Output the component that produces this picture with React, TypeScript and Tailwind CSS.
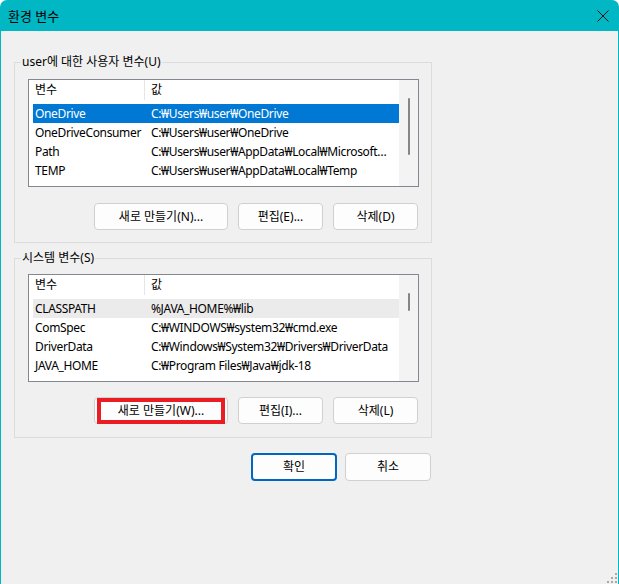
import React from 'react';

type Row = { name: string; value: string };

const userVars: Row[] = [
  { name: 'OneDrive', value: 'C:₩Users₩user₩OneDrive' },
  { name: 'OneDriveConsumer', value: 'C:₩Users₩user₩OneDrive' },
  { name: 'Path', value: 'C:₩Users₩user₩AppData₩Local₩Microsoft…' },
  { name: 'TEMP', value: 'C:₩Users₩user₩AppData₩Local₩Temp' },
];

const systemVars: Row[] = [
  { name: 'CLASSPATH', value: '%JAVA_HOME%₩lib' },
  { name: 'ComSpec', value: 'C:₩WINDOWS₩system32₩cmd.exe' },
  { name: 'DriverData', value: 'C:₩Windows₩System32₩Drivers₩DriverData' },
  { name: 'JAVA_HOME', value: 'C:₩Program Files₩Java₩jdk-18' },
];

function VarList({
  rows,
  selected,
  focused,
  thumbTop,
  thumbHeight,
}: {
  rows: Row[];
  selected: number;
  focused: boolean;
  thumbTop: string;
  thumbHeight: string;
}) {
  return (
    <div className="ml-[13px] flex h-[108px] w-[391px] border border-[#828790] bg-white">
      <div className="w-[370px] overflow-hidden">
        {/* header */}
        <div className="flex h-[24px] items-start">
          <div className="flex h-[20px] w-[116px] items-center border-r border-[#e5e5e5] pl-[6px]">변수</div>
          <div className="flex h-[20px] items-center pl-[6px]">값</div>
        </div>
        {/* rows */}
        <div className="pl-[4px] tracking-[-0.35px]">
          {rows.map((r, i) => {
            const sel = i === selected;
            const bg = sel ? (focused ? 'bg-[#0078d4] text-white' : 'bg-[#ebebeb]') : '';
            return (
              <div key={r.name} className={`flex h-[19px] items-center whitespace-nowrap ${bg}`}>
                <div className="w-[112px] truncate pl-[2px]">{r.name}</div>
                <div className="w-[254px] truncate pl-[6px]">{r.value}</div>
              </div>
            );
          })}
        </div>
      </div>
      {/* scrollbar */}
      <div className="flex w-[19px] justify-center bg-[#f3f3f3]">
        <div className={`w-[2px] rounded-full bg-[#868686] ${thumbTop} ${thumbHeight}`} />
      </div>
    </div>
  );
}

function Btn({ children, w, h = 'h-[27px]', primary }: { children: React.ReactNode; w: string; h?: string; primary?: boolean }) {
  return (
    <button
      className={`flex ${h} ${w} items-center justify-center rounded-[4px] bg-[#fdfdfd] ${
        primary ? 'border-2 border-[#0067c0]' : 'border border-[#d0d0d0]'
      }`}
    >
      {children}
    </button>
  );
}

export default function App() {
  return (
    <div className="relative h-[584px] w-[619px] overflow-hidden bg-white font-[family-name:'Noto_Sans','Noto_Sans_CJK_KR',sans-serif] text-[12px] leading-[16px] text-black">
      <div className="flex h-full flex-col rounded-t-[7px] bg-[#00b7c3] px-px">
        {/* title bar */}
        <div className="flex h-[31px] shrink-0 items-center justify-between pl-[7px] pr-[9px]">
          <span className="text-[13px]">환경 변수</span>
          <svg width="12" height="12" viewBox="0 0 12 12">
            <path d="M0.5 0.5 L11.5 11.5 M11.5 0.5 L0.5 11.5" stroke="#111" strokeWidth="1" />
          </svg>
        </div>

        {/* body */}
        <div className="flex-1 bg-[#f0f0f0] pl-[13px] pt-[23px]">
          <fieldset className="w-[418px] border border-[#dcdcdc] pb-[12px]">
            <legend className="ml-[6px] px-[1px] leading-[16px]">user에 대한 사용자 변수(U)</legend>
            <div className="mt-[9px]">
              <VarList rows={userVars} selected={0} focused thumbTop="mt-[18px]" thumbHeight="h-[57px]" />
            </div>
            <div className="mr-[13px] mt-[16px] flex justify-end gap-[10px]">
              <Btn w="w-[134px]">새로 만들기(N)...</Btn>
              <Btn w="w-[85px]">편집(E)...</Btn>
              <Btn w="w-[85px]">삭제(D)</Btn>
            </div>
          </fieldset>

          <fieldset className="mt-[7px] w-[418px] border border-[#dcdcdc] pb-[13px]">
            <legend className="ml-[6px] px-[1px] leading-[16px]">시스템 변수(S)</legend>
            <div className="mt-[8px]">
              <VarList rows={systemVars} selected={0} focused={false} thumbTop="mt-[18px]" thumbHeight="h-[18px]" />
            </div>
            <div className="mr-[13px] mt-[15px] flex justify-end gap-[10px]">
              <div className="relative">
                <Btn w="w-[134px]">새로 만들기(W)...</Btn>
                <div className="pointer-events-none absolute left-[3px] top-[1px] h-[26px] w-[128px] border-4 border-[#ea1c24]" />
              </div>
              <Btn w="w-[85px]">편집(I)...</Btn>
              <Btn w="w-[85px]">삭제(L)</Btn>
            </div>
          </fieldset>

          <div className="mt-[15px] flex w-[417px] justify-end gap-[8px]">
            <Btn w="w-[86px]" h="h-[28px]" primary>
              확인
            </Btn>
            <Btn w="w-[86px]" h="h-[28px]">
              취소
            </Btn>
          </div>
        </div>
      </div>

      {/* resize grip */}
      <svg className="absolute bottom-[1px] right-[2px]" width="10" height="10" viewBox="0 0 10 10">
        <rect x="8" y="0" width="2" height="2" fill="#a8a8a8" />
        <rect x="4" y="4" width="2" height="2" fill="#a8a8a8" />
        <rect x="8" y="4" width="2" height="2" fill="#a8a8a8" />
        <rect x="0" y="8" width="2" height="2" fill="#a8a8a8" />
        <rect x="4" y="8" width="2" height="2" fill="#a8a8a8" />
        <rect x="8" y="8" width="2" height="2" fill="#a8a8a8" />
      </svg>
    </div>
  );
}
